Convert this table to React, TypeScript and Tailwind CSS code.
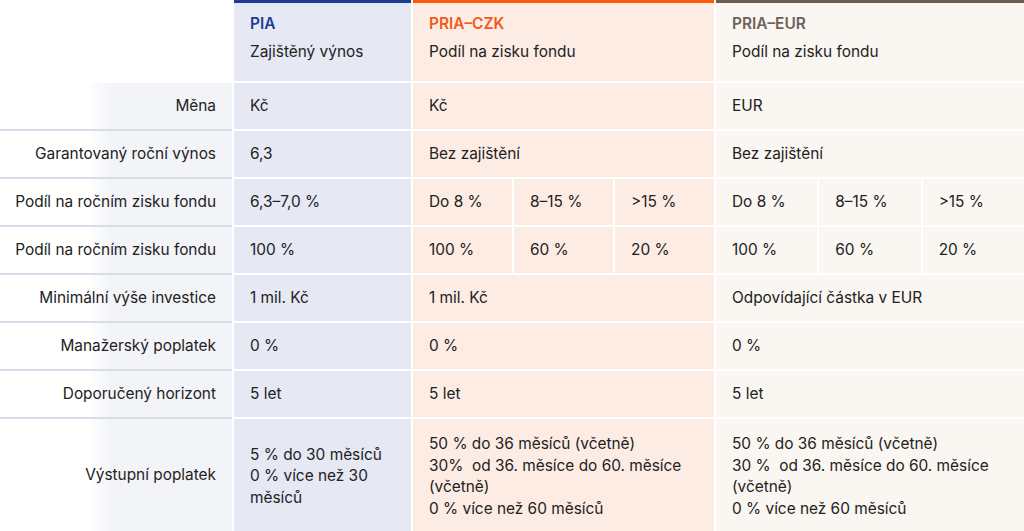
const font = { fontFamily: 'Inter, "Noto Sans", sans-serif' };

type Col = 'pia' | 'czk' | 'eur';
const bg: Record<Col, string> = {
  pia: 'bg-[#e6e8f4]',
  czk: 'bg-[#fdece4]',
  eur: 'bg-[#faf6f1]',
};

type Row = { label: string; pia: string[]; czk: string[]; eur: string[] };

const rows: Row[] = [
  { label: 'Měna', pia: ['Kč'], czk: ['Kč'], eur: ['EUR'] },
  { label: 'Garantovaný roční výnos', pia: ['6,3'], czk: ['Bez zajištění'], eur: ['Bez zajištění'] },
  { label: 'Podíl na ročním zisku fondu', pia: ['6,3–7,0 %'], czk: ['Do 8 %', '8–15 %', '>15 %'], eur: ['Do 8 %', '8–15 %', '>15 %'] },
  { label: 'Podíl na ročním zisku fondu', pia: ['100 %'], czk: ['100 %', '60 %', '20 %'], eur: ['100 %', '60 %', '20 %'] },
  { label: 'Minimální výše investice', pia: ['1 mil. Kč'], czk: ['1 mil. Kč'], eur: ['Odpovídající částka v EUR'] },
  { label: 'Manažerský poplatek', pia: ['0 %'], czk: ['0 %'], eur: ['0 %'] },
  { label: 'Doporučený horizont', pia: ['5 let'], czk: ['5 let'], eur: ['5 let'] },
];

const exitFee = {
  pia: ['5 % do 30 měsíců', '0 % více než 30 měsíců'],
  czk: ['50 % do 36 měsíců (včetně)', '30%  od 36. měsíce do 60. měsíce (včetně)', '0 % více než 60 měsíců'],
  eur: ['50 % do 36 měsíců (včetně)', '30 %  od 36. měsíce do 60. měsíce (včetně)', '0 % více než 60 měsíců'],
};

function Label({ children, tall }: { children: string; tall?: boolean }) {
  return (
    <div
      className={`flex w-[232px] shrink-0 items-center justify-end border-b-2 border-[#d9dce9] bg-gradient-to-r from-white from-[38%] to-[#f3f4f8] to-[48%] pr-4 ${tall ? 'h-[114px]' : 'h-[48px]'}`}
    >
      {children}
    </div>
  );
}

function Cells({ col, values, w }: { col: Col; values: string[]; w: string }) {
  if (values.length === 1)
    return (
      <div className={`flex h-[48px] items-center border-b-2 border-white pl-4 ${bg[col]} ${w}`}>{values[0]}</div>
    );
  return (
    <div className={`flex gap-[2px] ${w}`}>
      {values.map((v, i) => (
        <div key={i} className={`flex h-[48px] flex-1 items-center border-b-2 border-white pl-4 ${bg[col]}`}>
          {v}
        </div>
      ))}
    </div>
  );
}

const widths: Record<Col, string> = { pia: 'w-[177px] shrink-0', czk: 'w-[301px] shrink-0', eur: 'flex-1' };

export default function App() {
  return (
    <div className="h-[531px] w-[1024px] overflow-hidden bg-white text-[15.4px] text-[#222]" style={font}>
      <div className="flex gap-[2px]">
        <div className="w-[232px] shrink-0" />
        {(
          [
            ['pia', 'PIA', 'Zajištěný výnos', 'border-[#1f3a8f]', 'text-[#1c3b98]'],
            ['czk', 'PRIA–CZK', 'Podíl na zisku fondu', 'border-[#ff5a0a]', 'text-[#f25a1c]'],
            ['eur', 'PRIA–EUR', 'Podíl na zisku fondu', 'border-[#6b5d52]', 'text-[#6d625a]'],
          ] as [Col, string, string, string, string][]
        ).map(([c, t, s, b, tc]) => (
          <div key={c} className={`h-[83px] border-t-[3px] border-b-2 border-b-white pl-4 pt-[9px] ${b} ${bg[c]} ${widths[c]}`}>
            <div className={`font-semibold leading-6 ${tc}`}>{t}</div>
            <div className="mt-1 leading-6">{s}</div>
          </div>
        ))}
      </div>
      {rows.map((r, i) => (
        <div key={i} className="flex gap-[2px]">
          <Label>{r.label}</Label>
          <Cells col="pia" values={r.pia} w={widths.pia} />
          <Cells col="czk" values={r.czk} w={widths.czk} />
          <Cells col="eur" values={r.eur} w={widths.eur} />
        </div>
      ))}
      <div className="flex gap-[2px]">
        <Label tall>Výstupní poplatek</Label>
        {(['pia', 'czk', 'eur'] as Col[]).map((c) => (
          <div key={c} className={`flex h-[114px] flex-col justify-center pl-4 pr-3 leading-[21.5px] ${bg[c]} ${widths[c]}`}>
            {exitFee[c].map((l, i) => (
              <div key={i} className="whitespace-pre-wrap">
                {l}
              </div>
            ))}
          </div>
        ))}
      </div>
    </div>
  );
}
